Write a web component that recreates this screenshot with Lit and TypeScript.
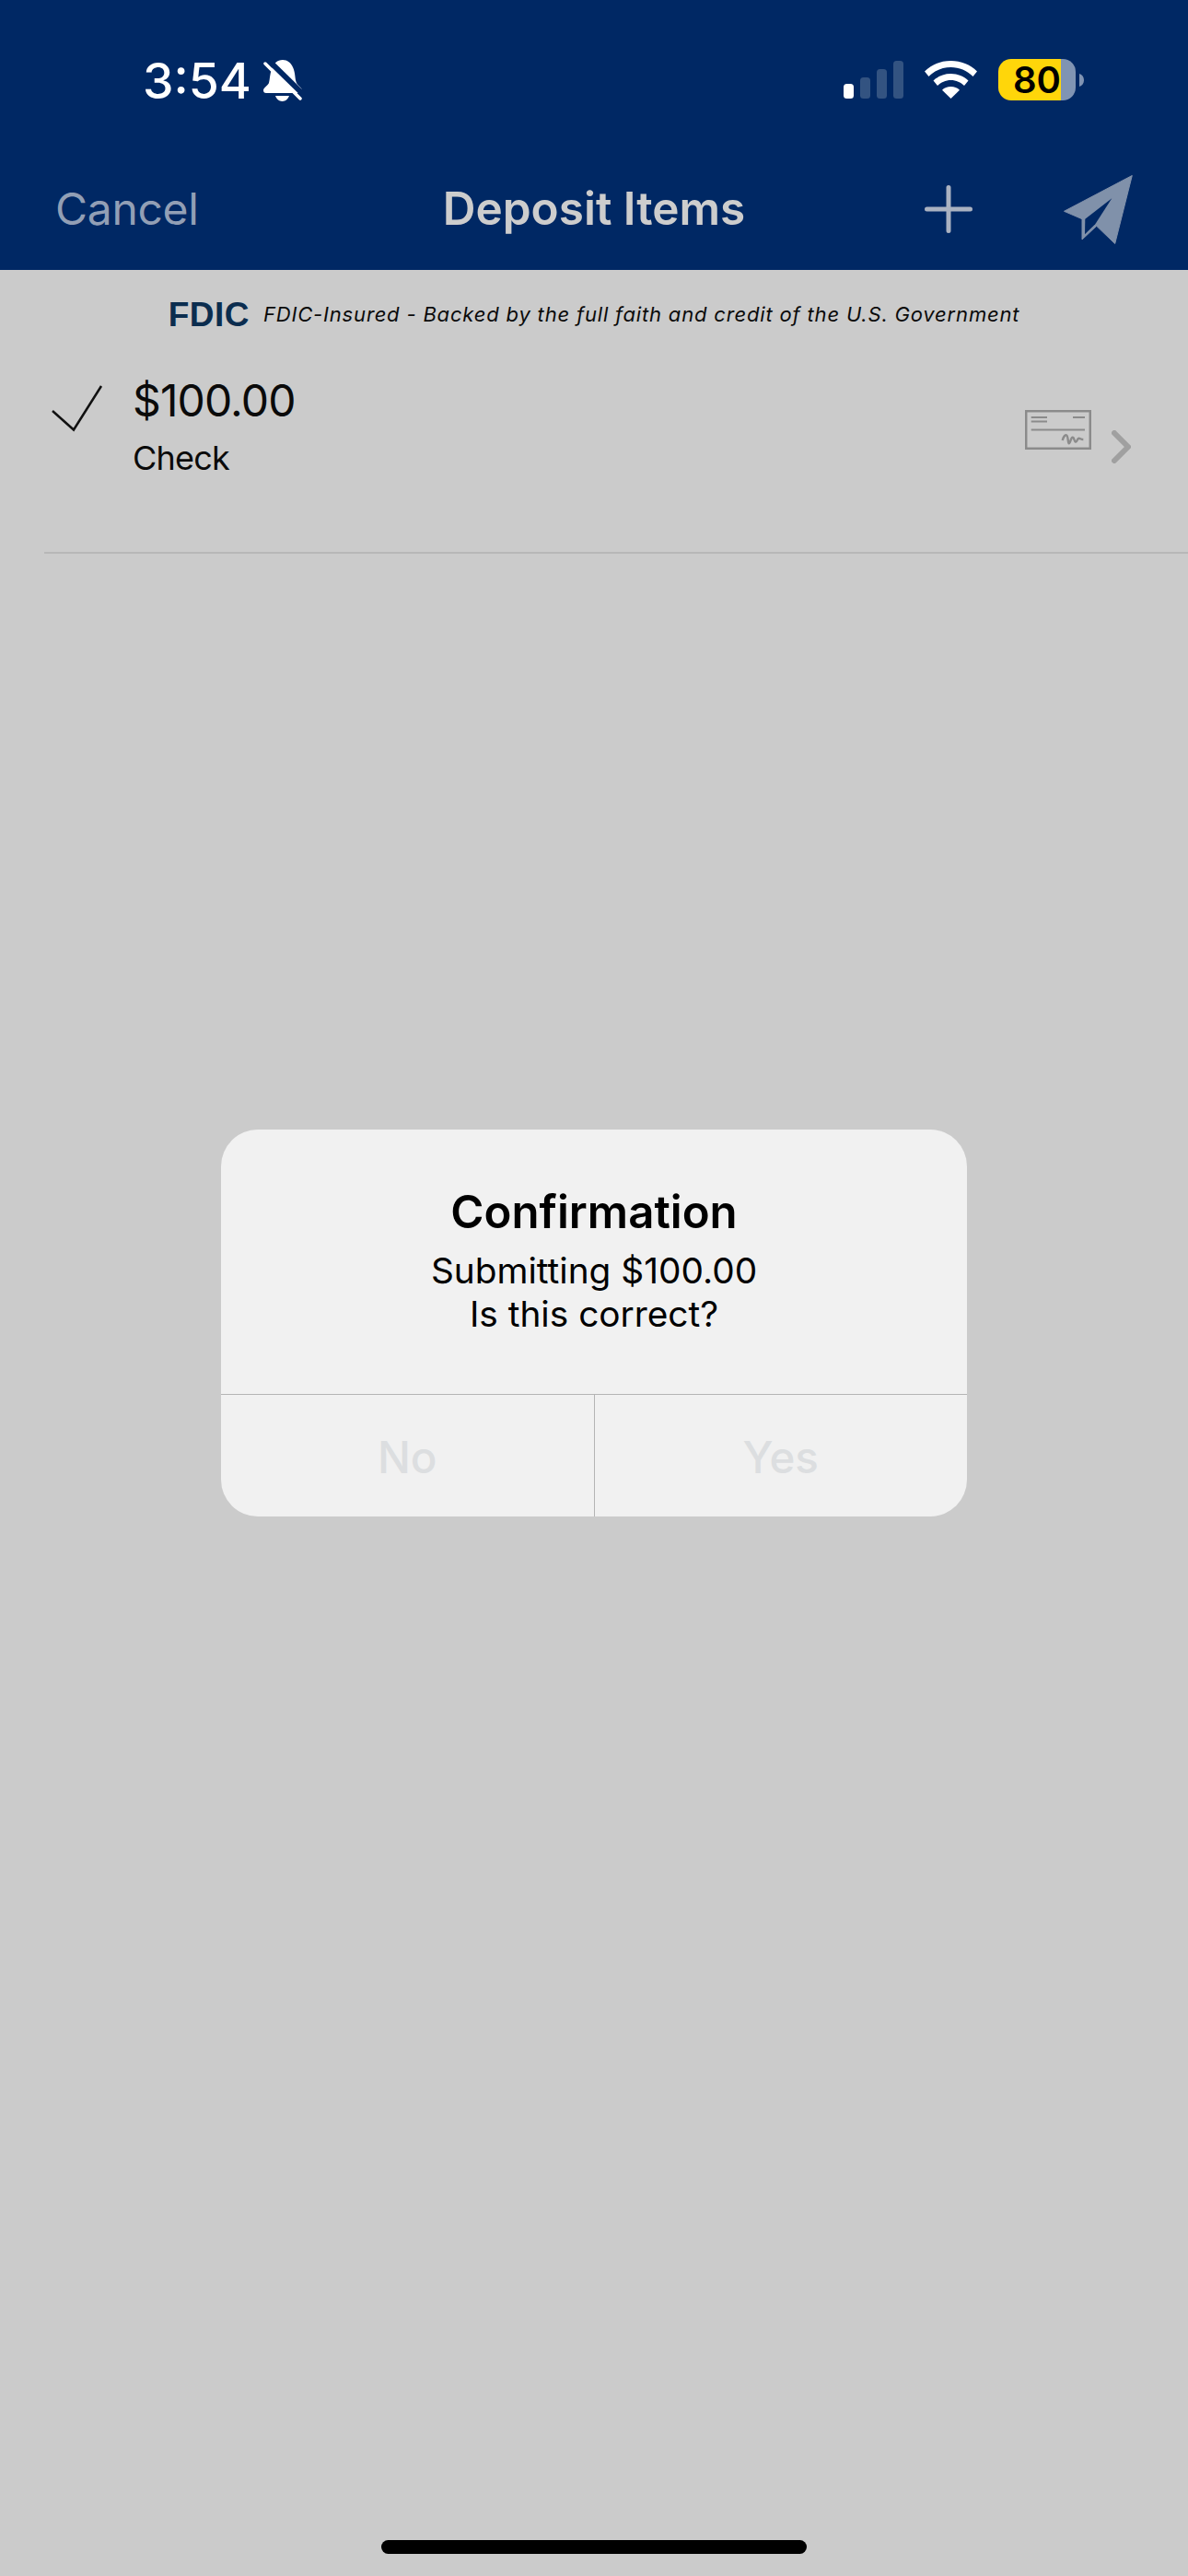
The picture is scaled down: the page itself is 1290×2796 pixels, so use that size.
import { LitElement, html, css } from "lit";
import { customElement } from "lit/decorators.js";

@customElement("app-root")
export class AppRoot extends LitElement {
  static styles = css`
    :host { display: block; width: 1290px; height: 2796px; background: #cbcbcb; font-family: Inter, "Liberation Sans", sans-serif; position: relative; overflow: hidden; }
    svg { display: block; flex: none; }
    .top { background: #002864; height: 293px; }
    .status { height: 173px; display: flex; align-items: center; justify-content: space-between; padding: 0 113px 0 155px; box-sizing: border-box; }
    .time-wrap { display: flex; align-items: center; gap: 13px; margin-top: 2px; }
    .time { color: #fff; font-size: 53.5px; font-weight: 500; line-height: 1; }
    .status-right { display: flex; align-items: center; gap: 23px; }
    .battery-wrap { display: flex; align-items: center; gap: 4px; }
    .battery { width: 84px; height: 45px; border-radius: 14px; box-sizing: border-box; padding-left: 16px; background: linear-gradient(90deg, #ffd60a 68px, #8094b3 68px); color: #000; font-size: 40px; font-weight: 600; line-height: 45px; }
    .nav { height: 108px; display: grid; grid-template-columns: 1fr auto 1fr; align-items: center; }
    .cancel { font-size: 48px; color: #929fb5; line-height: 1; padding-left: 60px; letter-spacing: -0.3px; }
    .title { font-size: 49.5px; font-weight: 600; color: #cdcdcd; line-height: 1; }
    .nav-icons { display: flex; align-items: center; justify-content: flex-end; gap: 99px; padding-right: 60px; }
    .banner { height: 96px; display: flex; align-items: center; justify-content: center; gap: 15px; }
    .fdic { font-family: "Liberation Sans", sans-serif; font-size: 37px; font-weight: 700; color: #0b2d4f; line-height: 1; letter-spacing: 0.5px; }
    .banner-text { font-size: 22px; font-style: italic; color: #0a0a0a; letter-spacing: 0.82px; line-height: 1; }
    .row { margin-left: 48px; height: 210px; border-bottom: 2px solid #b7b7b7; display: flex; align-items: flex-start; }
    .tick { margin: 28px 0 0 8px; }
    .cell { margin-left: 32px; display: flex; flex-direction: column; color: #0a0a0a; }
    .amount { font-size: 48px; line-height: 56px; margin-top: 18px; letter-spacing: -0.9px; }
    .kind { font-size: 36px; line-height: 44px; margin-top: 12px; letter-spacing: -0.8px; }
    .row-end { margin-left: auto; display: flex; align-items: flex-start; gap: 22px; margin-top: 56px; margin-right: 62px; }
    .chevron { margin-top: 22px; }
    .dialog { position: absolute; left: 240px; top: 1226px; width: 810px; height: 420px; background: #f1f1f1; border-radius: 40px; display: flex; flex-direction: column; overflow: hidden; }
    .body { height: 287px; border-bottom: 1px solid #b4b4b4; display: flex; flex-direction: column; align-items: center; color: #000; }
    .d-title { font-size: 49.2px; font-weight: 600; line-height: 62px; margin-top: 58px; }
    .d-msg { font-size: 38.8px; line-height: 47px; margin-top: 9px; text-align: center; }
    .actions { flex: 1; display: flex; }
    .act { flex: 1; display: flex; align-items: center; justify-content: center; font-size: 47.5px; font-weight: 500; color: #dcdee0; padding-top: 2px; }
    .act + .act { border-left: 1px solid #b4b4b4; }
    .home { position: absolute; left: 414px; top: 2757px; width: 462px; height: 15px; border-radius: 8px; background: #000; }
  `;

  render() {
    return html`
      <div class="top">
        <div class="status">
          <div class="time-wrap">
            <span class="time">3:54</span>
            <svg width="42" height="45" viewBox="0 0 42 45">
              <path fill="#fff" d="M21 0c5 0 9 3 11 8 3 6 2 13 4 17 1 3 6 5 6 8 0 2-1 3-3 3H3c-2 0-3-1-3-3 0-3 5-5 6-8 1-4 1-10 3-15C11 4 15 0 21 0z"/>
              <path fill="#fff" d="M13 39h15c-1 3-4 6-7.500 6S14 42 13 39z"/>
              <path stroke="#002864" stroke-width="6" fill="none" d="M4-1 46 40"/>
              <path stroke="#fff" stroke-width="3.500" stroke-linecap="round" fill="none" d="M2 4 40 42"/>
            </svg>
          </div>
          <div class="status-right">
            <svg width="65" height="41" viewBox="0 0 65 41">
              <rect x="0" y="25" width="11" height="16" rx="3.500" fill="#fff"/>
              <rect x="18" y="18" width="11" height="23" rx="3.500" fill="#335381"/>
              <rect x="36" y="9" width="11" height="32" rx="3.500" fill="#335381"/>
              <rect x="54" y="0" width="11" height="41" rx="3.500" fill="#335381"/>
            </svg>
            <svg width="57" height="41" viewBox="0 0 57 41">
              <path fill="#fff" d="M28.500 0C39.500 0 49.500 4 57 11.500l-4.500 5.500C46 10.500 37.500 7 28.500 7S11 10.500 4.500 17L0 11.500C7.500 4 17.500 0 28.500 0z"/>
              <path fill="#fff" d="M28.500 14c7.500 0 14 2.800 19 7.500l-4.500 5.500C39.300 23.400 34.200 21 28.500 21S17.700 23.400 14 27l-4.500-5.500C14.500 16.800 21 14 28.500 14z"/>
              <path fill="#fff" d="M28.500 28c3.800 0 7 1.300 9.500 3.700L28.500 41 19 31.700C21.500 29.300 24.700 28 28.500 28z"/>
            </svg>
            <div class="battery-wrap">
              <div class="battery">80</div>
              <svg width="5" height="14" viewBox="0 0 5 14"><path d="M0 0c3 1 5 3.500 5 7s-2 6-5 7z" fill="#8094b3"/></svg>
            </div>
          </div>
        </div>
        <div class="nav">
          <span class="cancel">Cancel</span>
          <span class="title">Deposit Items</span>
          <div class="nav-icons">
            <svg width="52" height="52" viewBox="0 0 52 52" stroke="#aab2c1" stroke-width="5" stroke-linecap="round"><path d="M26 2.500v47M2.500 26h47"/></svg>
            <svg width="75" height="75" viewBox="0 0 75 75">
              <path fill="#8091aa" stroke="#8091aa" stroke-width="1" stroke-linejoin="round" d="M74.300.5 55.700 74.500 35.700 55.300 20 70V47.700L.5 39.300z"/>
              <path fill="#002864" d="M52.300 25.300 23.300 47.700 23 64.300 34.300 53.300z"/>
            </svg>
          </div>
        </div>
      </div>
      <div class="banner">
        <span class="fdic">FDIC</span>
        <span class="banner-text">FDIC-Insured - Backed by the full faith and credit of the U.S. Government</span>
      </div>
      <div class="row">
        <svg class="tick" width="56" height="52" viewBox="0 0 56 52" fill="none" stroke="#111" stroke-width="2.500"><path d="M1 29l23 20.500L54 2"/></svg>
        <div class="cell">
          <span class="amount">$100.00</span>
          <span class="kind">Check</span>
        </div>
        <div class="row-end">
          <svg width="72" height="43" viewBox="0 0 72 43" fill="none" stroke="#8b8b8b" stroke-width="2.500">
            <rect x="1.200" y="1.200" width="69.600" height="40.600"/>
            <path d="M6.700 8h17.300M6.700 12.500h17.300M52 8h13M6.700 21.500h58.300" stroke-width="2.200"/>
            <path d="M40.700 33c1-4 3-6 4.300-5.700 2 .5 1.500 9 2.700 9 1.500 0 2-6.600 4-6.600s1.500 5 3.300 5 1.800-4 3.300-4 2.500 1.300 5 1.300" stroke-width="2.400"/>
          </svg>
          <svg class="chevron" width="21" height="36" viewBox="0 0 21 36" fill="none" stroke="#a0a0a0" stroke-width="6" stroke-linecap="round" stroke-linejoin="round"><path d="M3 3l15 15L3 33"/></svg>
        </div>
      </div>
      <div class="dialog">
        <div class="body">
          <span class="d-title">Confirmation</span>
          <span class="d-msg">Submitting $100.00<br />Is this correct?</span>
        </div>
        <div class="actions">
          <div class="act">No</div>
          <div class="act">Yes</div>
        </div>
      </div>
      <div class="home"></div>
    `;
  }
}
